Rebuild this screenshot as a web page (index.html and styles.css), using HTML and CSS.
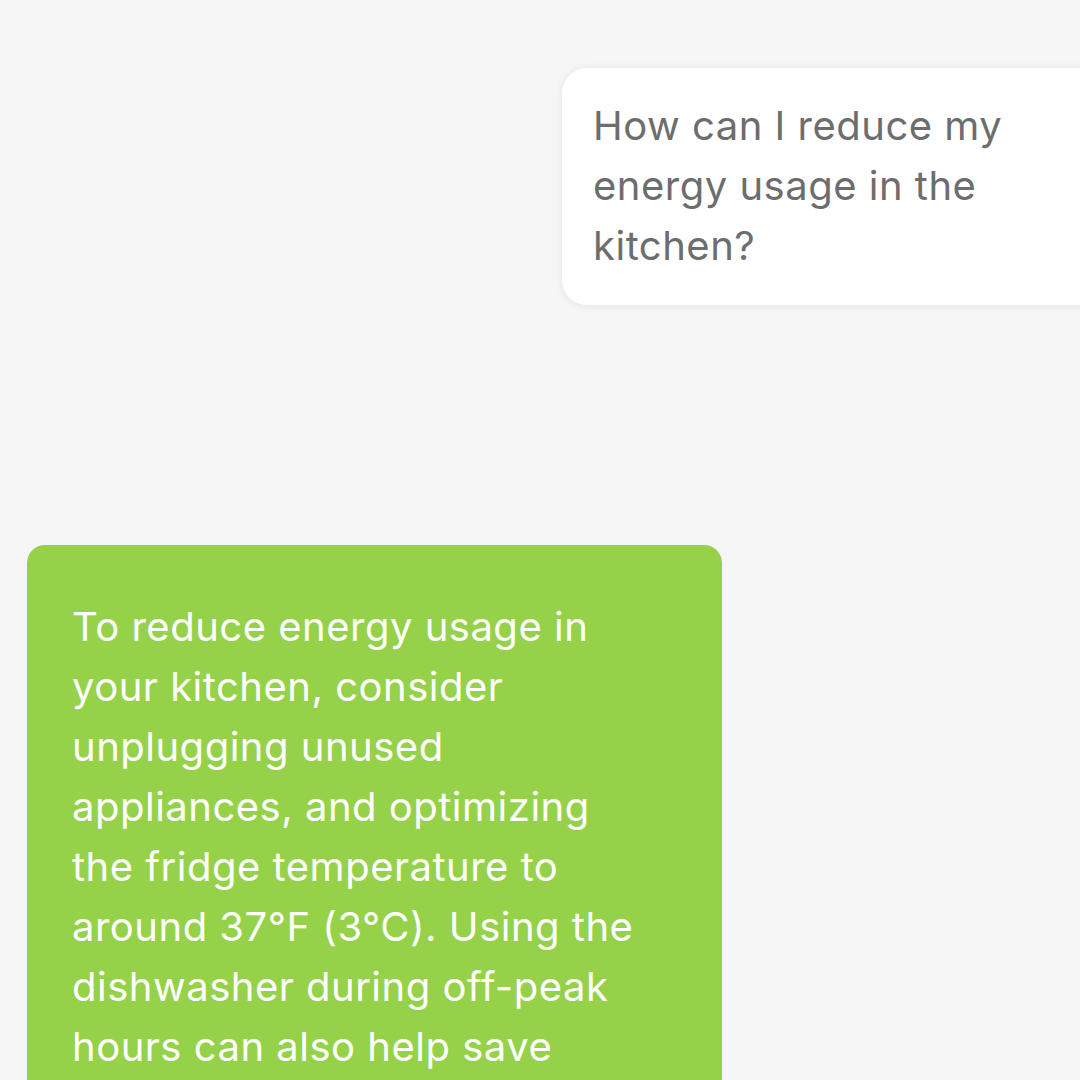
FILE: index.html
```html
<!DOCTYPE html>
<html>
<head>
<meta charset="utf-8">
<link rel="stylesheet" href="styles.css">
</head>
<body>
<main class="chat">
  <div class="row row-user">
    <div class="bubble bubble-user">How can I reduce my<br>energy usage in the<br>kitchen?</div>
  </div>
  <div class="row row-bot">
    <div class="bubble bubble-bot">To reduce energy usage in<br>your kitchen, consider<br>unplugging unused<br>appliances, and optimizing<br>the fridge temperature to<br>around 37°F (3°C). Using the<br>dishwasher during off-peak<br>hours can also help save</div>
  </div>
</main>
</body>
</html>
```
FILE: styles.css
```css
html, body {
  margin: 0;
  padding: 0;
  height: 1080px;
  overflow: hidden;
  background: #f6f6f6;
}
.chat {
  display: flex;
  flex-direction: column;
  gap: 240px;
  padding-top: 68px;
  font-family: Inter, "Noto Sans", sans-serif;
  font-size: 40px;
  line-height: 60px;
  letter-spacing: 0.5px;
}
.row {
  display: flex;
}
.row-user {
  justify-content: flex-end;
}
.bubble-user {
  background: #ffffff;
  color: #6d6d6d;
  border-radius: 25px;
  padding: 28px 60px 29px 31px;
  margin-right: -30px;
  width: 457px;
  box-shadow: 0 1px 8px rgba(0, 0, 0, 0.08);
}
.row-bot {
  padding-left: 27px;
}
.bubble-bot {
  background: #95d24a;
  color: #ffffff;
  width: 650px;
  padding: 52px 0 4px 45px;
  border-radius: 18px 18px 0 0;
}
```
